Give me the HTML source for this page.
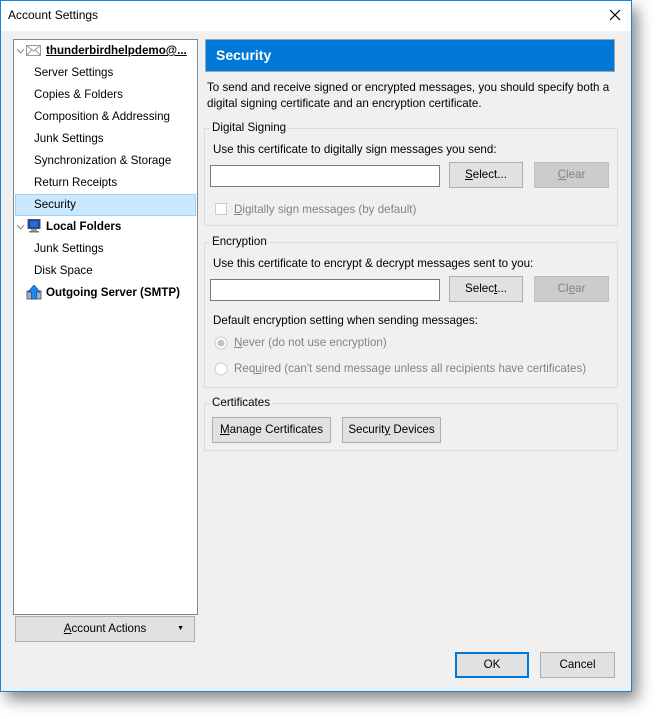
<!DOCTYPE html>
<html><head><style>
*{box-sizing:border-box}
body{margin:0;width:659px;height:719px;background:#fff;font-family:"Liberation Sans",sans-serif;font-size:11.6px;color:#000;position:relative;overflow:hidden}
.win{position:absolute;left:0;top:0;width:632px;height:692px;background:#f0f0f0;box-shadow:inset 0 0 0 1px #1883d7,6px 8px 14px rgba(0,0,0,.45)}
.title{position:absolute;left:1px;top:1px;width:630px;height:30px;background:#fff}
.a{position:absolute;white-space:nowrap}
.btn{position:absolute;background:#e1e1e1;border:1px solid #adadad;text-align:center;line-height:23px}
.dis{background:#cccccc;border-color:#bfbfbf;color:#838383}
.inp{position:absolute;background:#fff;border:1px solid #7a7a7a}
.grp{position:absolute;border:1px solid #dcdcdc}
.leg{position:absolute;background:#f0f0f0;padding:0 2px;top:-8px;left:5px;line-height:14px}
.tree{position:absolute;left:13px;top:39px;width:185px;height:576px;background:#fff;border:1px solid #828790}
.ti{position:absolute;left:20px;line-height:16px}
u{text-decoration:underline}
</style></head><body>
<div class="win">
<div class="title"></div>
<div class="a" style="left:8px;top:8px;font-size:12px">Account Settings</div>
<svg class="a" style="left:609px;top:9px" width="12" height="12"><path d="M1 1L11 11M11 1L1 11" stroke="#000" stroke-width="1.2"/></svg>

<div class="tree">
 <svg class="a" style="left:2px;top:7px" width="10" height="8"><path d="M1 2L4.5 6L8 2" stroke="#888" fill="none"/></svg>
 <svg class="a" style="left:12px;top:5px" width="15" height="11"><rect x="0.5" y="0.5" width="14" height="10" fill="#fff" stroke="#999"/><path d="M0.5 0.5L7.5 6L14.5 0.5M0.5 10.5L5.5 5M14.5 10.5L9.5 5" stroke="#999" fill="none"/></svg>
 <div class="ti" style="left:32px;top:3px;font-weight:bold;text-decoration:underline">thunderbirdhelpdemo@...</div>
 <div class="ti" style="top:25px">Server Settings</div>
 <div class="ti" style="top:47px">Copies &amp; Folders</div>
 <div class="ti" style="top:69px">Composition &amp; Addressing</div>
 <div class="ti" style="top:91px">Junk Settings</div>
 <div class="ti" style="top:113px">Synchronization &amp; Storage</div>
 <div class="ti" style="top:135px">Return Receipts</div>
 <div class="a" style="left:1px;top:154px;width:181px;height:22px;background:#cce8ff;border:1px solid #99d1ff"></div>
 <div class="ti" style="top:157px">Security</div>
 <svg class="a" style="left:2px;top:183px" width="10" height="8"><path d="M1 2L4.5 6L8 2" stroke="#888" fill="none"/></svg>
 <svg class="a" style="left:13px;top:179px" width="14" height="14"><rect x="1" y="0.5" width="12" height="9" fill="#1a3c9a" stroke="#555"/><rect x="3" y="2" width="8" height="6" fill="#2a6ad8"/><rect x="4" y="10" width="6" height="2" fill="#999"/><rect x="2" y="12" width="10" height="1.5" fill="#777"/></svg>
 <div class="ti" style="left:32px;top:179px;font-weight:bold">Local Folders</div>
 <div class="ti" style="top:201px">Junk Settings</div>
 <div class="ti" style="top:223px">Disk Space</div>
 <svg class="a" style="left:12px;top:245px" width="16" height="15"><rect x="1" y="6" width="14" height="8" fill="#aab" stroke="#667"/><path d="M8 0L14 7H10.5V14H5.5V7H2Z" fill="#1e88e5" stroke="#0d47a1" stroke-width=".7"/></svg>
 <div class="ti" style="left:32px;top:245px;font-weight:bold">Outgoing Server (SMTP)</div>
</div>
<div class="btn" style="left:15px;top:616px;width:180px;height:26px;line-height:24px"><u>A</u>ccount Actions<span class="a" style="right:10px;top:0;font-size:7px">▼</span></div>

<div class="a" style="left:205px;top:39px;width:410px;height:33px;background:#0078d7;border:1px solid #9aa7b2;color:#fff;font-weight:bold;font-size:14px;line-height:31px;padding-left:10px">Security</div>
<div class="a" style="left:207px;top:80px;line-height:16px">To send and receive signed or encrypted messages, you should specify both a<br>digital signing certificate and an encryption certificate.</div>

<div class="grp" style="left:204px;top:128px;width:414px;height:98px"><div class="leg">Digital Signing</div></div>
<div class="a" style="left:213px;top:143px">Use this certificate to digitally sign messages you send:</div>
<div class="inp" style="left:210px;top:165px;width:230px;height:22px"></div>
<div class="btn" style="left:449px;top:162px;width:74px;height:26px"><u>S</u>elect...</div>
<div class="btn dis" style="left:534px;top:162px;width:75px;height:26px"><u>C</u>lear</div>
<div class="a" style="left:215px;top:203px;width:12px;height:12px;border:1px solid #ccc;background:#fff"></div>
<div class="a" style="left:234px;top:203px;color:#838383"><u>D</u>igitally sign messages (by default)</div>

<div class="grp" style="left:204px;top:242px;width:414px;height:146px"><div class="leg">Encryption</div></div>
<div class="a" style="left:213px;top:257px">Use this certificate to encrypt &amp; decrypt messages sent to you:</div>
<div class="inp" style="left:210px;top:279px;width:230px;height:22px"></div>
<div class="btn" style="left:449px;top:276px;width:74px;height:26px">Selec<u>t</u>...</div>
<div class="btn dis" style="left:534px;top:276px;width:75px;height:26px">Cl<u>e</u>ar</div>
<div class="a" style="left:213px;top:314px">Default encryption setting when sending messages:</div>
<svg class="a" style="left:214px;top:336px" width="14" height="14"><circle cx="7" cy="7" r="6" fill="#fff" stroke="#ccc"/><circle cx="7" cy="7" r="3.5" fill="#c4c4c4"/></svg>
<div class="a" style="left:234px;top:336px;color:#838383"><u>N</u>ever (do not use encryption)</div>
<svg class="a" style="left:214px;top:362px" width="14" height="14"><circle cx="7" cy="7" r="6" fill="#fff" stroke="#ccc"/></svg>
<div class="a" style="left:234px;top:362px;color:#838383">Req<u>u</u>ired (can't send message unless all recipients have certificates)</div>

<div class="grp" style="left:204px;top:403px;width:414px;height:48px"><div class="leg">Certificates</div></div>
<div class="btn" style="left:212px;top:417px;width:119px;height:26px"><u>M</u>anage Certificates</div>
<div class="btn" style="left:342px;top:417px;width:99px;height:26px">Securit<u>y</u> Devices</div>

<div class="btn" style="left:455px;top:652px;width:74px;height:26px;border:2px solid #0078d7;line-height:22px">OK</div>
<div class="btn" style="left:540px;top:652px;width:75px;height:26px">Cancel</div>
</div>
</body></html>
